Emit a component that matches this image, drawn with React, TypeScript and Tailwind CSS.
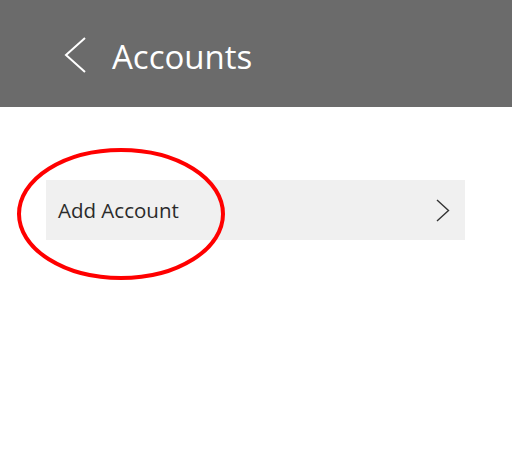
export default function App() {
  return (
    <div
      className="relative w-[512px] h-[467px] bg-white overflow-hidden"
      style={{ fontFamily: '"Open Sans", "Noto Sans", sans-serif' }}
    >
      {/* Header */}
      <div className="h-[107px] bg-[#6b6b6b] flex items-center">
        <button className="ml-[64px] mt-[2px] w-[22px] h-[36px] flex items-center justify-center">
          <svg width="22" height="36" viewBox="0 0 22 36" fill="none">
            <path d="M21 1 L2 18 L21 35" stroke="white" strokeWidth="2" />
          </svg>
        </button>
        <h1 className="ml-[26px] mt-[5px] text-[33px] text-white font-normal leading-none">
          Accounts
        </h1>
      </div>

      {/* List */}
      <div className="pt-[73px] pl-[46px] pr-[47px]">
        <div className="h-[60px] bg-[#f0f0f0] flex items-center justify-between pl-[12px] pr-[15px]">
          <span className="text-[20.5px] text-[#2b2b2b] mt-[1px]">Add Account</span>
          <svg width="14" height="23" viewBox="0 0 14 23" fill="none">
            <path d="M1 1 L12.5 11.5 L1 22" stroke="#333" strokeWidth="1.4" />
          </svg>
        </div>
      </div>

      {/* Highlight annotation */}
      <svg
        className="absolute left-0 top-0 pointer-events-none"
        width="512"
        height="467"
      >
        <ellipse
          cx="121"
          cy="214"
          rx="102"
          ry="64"
          fill="none"
          stroke="#ff0000"
          strokeWidth="4"
        />
      </svg>
    </div>
  );
}
